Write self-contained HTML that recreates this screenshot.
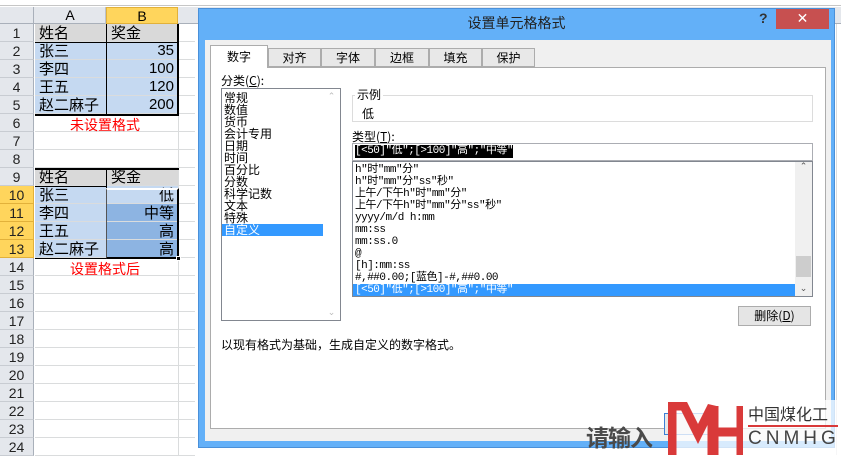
<!DOCTYPE html>
<html><head><meta charset="utf-8"><style>
*{margin:0;padding:0;box-sizing:border-box}
body{width:841px;height:455px;overflow:hidden;background:#fff;position:relative;font-family:"Liberation Sans","Noto Sans CJK SC",sans-serif;font-size:13px;color:#000}
.a{position:absolute}
.cj{font-family:"Noto Sans CJK SC","WenQuanYi Zen Hei",sans-serif}
.mo{font-family:"Liberation Mono","Noto Sans CJK SC",monospace}
.rh{position:absolute;left:0;width:34px;height:18px;background:#e4e7ec;border-bottom:1px solid #c8ccd2;border-right:1px solid #a9b0ba;text-align:center;font-size:14px;line-height:18px;color:#222}
.rh.s{background:#ffd55c;border-color:#e2b13a}
.c{position:absolute;height:18px;line-height:18px;font-size:15px;padding:0 4px;border-right:1px solid #dadcdd;border-bottom:1px solid #dadcdd}
.r{text-align:right}
.li{position:absolute;left:2px;font-size:12px;line-height:12px;white-space:nowrap}
.tb{position:absolute;top:0;height:19px;border:1px solid #acacac;background:#e8e8e8;text-align:center}
</style></head><body>
<div class="a" style="left:0;top:0;width:841px;height:6px;background:#fff;border-bottom:1px solid #c6c6c6"></div>
<div class="a" style="left:0;top:7px;width:841px;height:17px;background:#e4e7ec;border-bottom:1px solid #a9b0ba"></div>
<div class="a" style="left:0;top:7px;width:34px;height:17px;border-right:1px solid #a9b0ba"></div>
<div class="a" style="left:35px;top:7px;width:71px;height:17px;text-align:center;line-height:17px;font-size:14px;border-right:1px solid #bcc2ca">A</div>
<div class="a" style="left:106px;top:7px;width:72px;height:17px;text-align:center;line-height:17px;font-size:14px;background:#ffd55c;border:1px solid #e2b13a">B</div>
<div class="a" style="left:178px;top:24px;width:1px;height:431px;background:#dadcdd"></div>
<div id="rows"></div>
<script>
var h='';
for(var i=1;i<=24;i++){var y=24+(i-1)*18;var s=(i>=10&&i<=13)?' s':'';
h+='<div class="rh'+s+'" style="top:'+y+'px">'+i+'</div>';
h+='<div class="a" style="left:35px;top:'+(y+17)+'px;width:160px;height:1px;background:#dadcdd"></div>';}
document.getElementById('rows').innerHTML=h;
</script>
<div class="c cj" style="left:35px;top:24px;width:72px;background:#d9d9d9">姓名</div>
<div class="c cj" style="left:107px;top:24px;width:72px;background:#d9d9d9">奖金</div>
<div class="c cj" style="left:35px;top:42px;width:72px;background:#c5d9f1">张三</div><div class="c r" style="left:107px;top:42px;width:72px;background:#c5d9f1">35</div>
<div class="c cj" style="left:35px;top:60px;width:72px;background:#c5d9f1">李四</div><div class="c r" style="left:107px;top:60px;width:72px;background:#c5d9f1">100</div>
<div class="c cj" style="left:35px;top:78px;width:72px;background:#c5d9f1">王五</div><div class="c r" style="left:107px;top:78px;width:72px;background:#c5d9f1">120</div>
<div class="c cj" style="left:35px;top:96px;width:72px;background:#c5d9f1">赵二麻子</div><div class="c r" style="left:107px;top:96px;width:72px;background:#c5d9f1">200</div>
<div class="a" style="left:35px;top:42px;width:144px;height:1px;background:#000"></div>
<div class="a" style="left:35px;top:114px;width:144px;height:2px;background:#000"></div>
<div class="a" style="left:177px;top:24px;width:2px;height:92px;background:#000"></div>
<div class="a" style="left:106px;top:24px;width:1px;height:91px;background:#000"></div>
<div class="a cj" style="left:70px;top:116px;font-size:14px;color:#f00;line-height:18px">未设置格式</div>
<div class="c cj" style="left:35px;top:168px;width:72px;background:#d9d9d9">姓名</div>
<div class="c cj" style="left:107px;top:168px;width:72px;background:#d9d9d9">奖金</div>
<div class="c cj" style="left:35px;top:186px;width:72px;background:#c5d9f1">张三</div><div class="c r cj" style="left:107px;top:186px;width:72px;background:#c5d9f1">低</div>
<div class="c cj" style="left:35px;top:204px;width:72px;background:#c5d9f1">李四</div><div class="c r cj" style="left:107px;top:204px;width:72px;background:#8db4e2">中等</div>
<div class="c cj" style="left:35px;top:222px;width:72px;background:#c5d9f1">王五</div><div class="c r cj" style="left:107px;top:222px;width:72px;background:#8db4e2">高</div>
<div class="c cj" style="left:35px;top:240px;width:72px;background:#c5d9f1">赵二麻子</div><div class="c r cj" style="left:107px;top:240px;width:72px;background:#8db4e2">高</div>
<div class="a" style="left:35px;top:168px;width:144px;height:2px;background:#000"></div>
<div class="a" style="left:35px;top:186px;width:72px;height:1px;background:#000"></div>
<div class="a" style="left:35px;top:258px;width:144px;height:1px;background:#000"></div>
<div class="a" style="left:106px;top:168px;width:1px;height:90px;background:#000"></div>
<div class="a" style="left:106px;top:188px;width:73px;height:71px;border:2px solid #000;border-top-color:#fff;border-left:1px solid #555"></div>
<div class="a" style="left:176px;top:256px;width:5px;height:5px;background:#000;border:1px solid #fff"></div>
<div class="a cj" style="left:70px;top:260px;font-size:14px;color:#f00;line-height:18px">设置格式后</div>
<div class="a" style="left:836px;top:24px;width:5px;height:431px;background:#fff;border-left:1px solid #dadcdd"></div>
<!-- dialog -->
<div class="a" style="left:198px;top:8px;width:637px;height:440px;background:#63b0f8;border:1px solid #4a90d9"></div>
<div class="a cj" style="left:198px;top:8px;width:637px;height:32px;text-align:center;line-height:30px;font-size:14px;color:#222">设置单元格格式</div>
<div class="a" style="left:759px;top:10px;font-size:14px;font-weight:bold;color:#333">?</div>
<div class="a" style="left:776px;top:9px;width:53px;height:20px;background:#c75050;color:#fff;text-align:center;line-height:19px;font-size:14px">✕</div>
<div class="a" style="left:205px;top:40px;width:626px;height:401px;background:#f0f0f0"></div>
<div class="a cj" style="left:210px;top:45px;width:58px;height:23px;background:#fff;border:1px solid #acacac;border-bottom:none;text-align:center;line-height:22px;font-size:12px;z-index:2">数字</div>
<div class="a cj" style="left:268px;top:48px;width:270px;height:19px;font-size:12px;line-height:18px">
<span class="tb" style="left:0;width:53px">对齐</span>
<span class="tb" style="left:53px;width:54px">字体</span>
<span class="tb" style="left:107px;width:54px">边框</span>
<span class="tb" style="left:161px;width:53px">填充</span>
<span class="tb" style="left:214px;width:53px">保护</span></div>
<div class="a" style="left:210px;top:67px;width:616px;height:362px;background:#fff;border:1px solid #acacac"></div>
<div class="a cj" style="left:221px;top:72px;font-size:12px">分类(<u>C</u>):</div>
<div class="a cj" style="left:221px;top:88px;width:120px;height:233px;border:1px solid #828790;background:#fff;overflow:hidden">
<div class="li" style="top:3px">常规</div><div class="li" style="top:15px">数值</div><div class="li" style="top:27px">货币</div><div class="li" style="top:39px">会计专用</div><div class="li" style="top:51px">日期</div><div class="li" style="top:63px">时间</div><div class="li" style="top:75px">百分比</div><div class="li" style="top:87px">分数</div><div class="li" style="top:99px">科学记数</div><div class="li" style="top:111px">文本</div><div class="li" style="top:123px">特殊</div>
<div class="li" style="top:135px;left:0;width:102px;background:#3399ff;color:#fff;padding-left:2px">自定义</div>
<div class="a" style="right:0;top:0;width:17px;height:231px;background:#fff;color:#bbb;font-size:9px;text-align:center">⌃<div style="position:absolute;bottom:2px;width:17px">⌄</div></div></div>
<div class="a" style="left:352px;top:95px;width:461px;height:27px;border:1px solid #dcdcdc"></div>
<div class="a cj" style="left:355px;top:86px;font-size:12px;background:#fff;padding:0 2px">示例</div>
<div class="a cj" style="left:362px;top:105px;font-size:12px">低</div>
<div class="a cj" style="left:352px;top:128px;font-size:12px">类型(<u>T</u>):</div>
<div class="a" style="left:352px;top:143px;width:461px;height:18px;border:1px solid #abadb3;background:#fff"></div>
<div class="a mo" style="left:355px;top:145px;font-size:11px;line-height:13px;background:#000;color:#fff;letter-spacing:-0.5px">[&lt;50]"低";[&gt;100]"高";"中等"</div>
<div class="a mo" style="left:352px;top:161px;width:461px;height:136px;border:1px solid #828790;background:#fff;overflow:hidden">
<div class="li" style="top:2px;font-size:11px;letter-spacing:-0.5px">h"时"mm"分"</div><div class="li" style="top:14px;font-size:11px;letter-spacing:-0.5px">h"时"mm"分"ss"秒"</div><div class="li" style="top:26px;font-size:11px;letter-spacing:-0.5px">上午/下午h"时"mm"分"</div><div class="li" style="top:38px;font-size:11px;letter-spacing:-0.5px">上午/下午h"时"mm"分"ss"秒"</div><div class="li" style="top:50px;font-size:11px;letter-spacing:-0.5px">yyyy/m/d h:mm</div><div class="li" style="top:62px;font-size:11px;letter-spacing:-0.5px">mm:ss</div><div class="li" style="top:74px;font-size:11px;letter-spacing:-0.5px">mm:ss.0</div><div class="li" style="top:86px;font-size:11px">@</div><div class="li" style="top:98px;font-size:11px;letter-spacing:-0.5px">[h]:mm:ss</div><div class="li" style="top:110px;font-size:11px;letter-spacing:-0.5px">#,##0.00;[蓝色]-#,##0.00</div>
<div class="li" style="top:122px;left:0;width:442px;background:#3399ff;color:#fff;padding-left:2px;font-size:11px;letter-spacing:-0.5px">[&lt;50]"低";[&gt;100]"高";"中等"</div>
<div class="a" style="right:0;top:0;width:17px;height:134px;background:#f0f0f0;color:#555;font-size:9px;text-align:center">⌃<div style="position:absolute;left:1px;top:94px;width:15px;height:21px;background:#cdcdcd"></div><div style="position:absolute;bottom:2px;width:17px">⌄</div></div></div>
<div class="a cj" style="left:738px;top:306px;width:73px;height:20px;border:1px solid #acacac;background:#e5e5e5;text-align:center;line-height:18px;font-size:12px">删除(<u>D</u>)</div>
<div class="a cj" style="left:221px;top:336px;font-size:12px">以现有格式为基础，生成自定义的数字格式。</div>
<!-- watermark -->
<div class="a" style="left:664px;top:413px;width:46px;height:22px;border:1px solid #3c7fd6;background:#e8e8e8"></div>
<div class="a cj" style="left:586px;top:419px;font-size:23px;font-weight:bold;color:#4a4a4a;letter-spacing:-1px">请输入</div>
<div class="a" style="left:668px;top:400px;width:173px;height:55px;background:rgba(255,255,255,0.75)"></div>
<svg class="a" style="left:668px;top:402px" width="75" height="53"><path d="M4 53V4h12l14 28L44 4h0v49" fill="none" stroke="#d93a3a" stroke-width="9"/><path d="M46 4v49M73 4v49M46 30h27" stroke="#d93a3a" stroke-width="9"/></svg>
<div class="a cj" style="left:748px;top:404px;font-size:16px;line-height:18px;color:#333;white-space:nowrap">中国煤化工</div>
<div class="a" style="left:748px;top:425px;width:90px;height:2px;background:#d93a3a"></div>
<div class="a" style="left:748px;top:428px;font-size:19px;line-height:22px;color:#444;letter-spacing:4px;white-space:nowrap">CNMHG</div>
</body></html>
